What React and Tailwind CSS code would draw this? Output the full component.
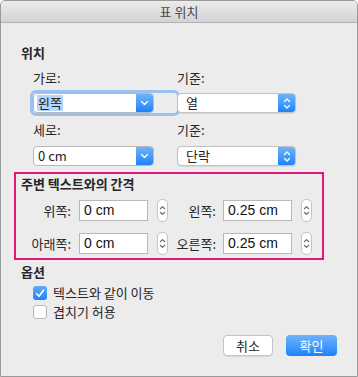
import React from "react";

const font = { fontFamily: '"Noto Sans CJK KR", "Liberation Sans", sans-serif' };
const numFont = { fontFamily: '"Liberation Sans", "Noto Sans CJK KR", sans-serif' };

function ChevronDown() {
  return (
    <svg width="9" height="6" viewBox="0 0 9 6" fill="none">
      <path d="M1.5 1.5 L4.5 4.5 L7.5 1.5" stroke="white" strokeWidth="1.4" strokeLinecap="round" strokeLinejoin="round" />
    </svg>
  );
}

function UpDown({ color = "white", w = 8, h = 13 }) {
  return (
    <svg width={w} height={h} viewBox="0 0 8 13" fill="none">
      <path d="M1.5 4.5 L4 2 L6.5 4.5" stroke={color} strokeWidth="1.3" strokeLinecap="round" strokeLinejoin="round" />
      <path d="M1.5 8.5 L4 11 L6.5 8.5" stroke={color} strokeWidth="1.3" strokeLinecap="round" strokeLinejoin="round" />
    </svg>
  );
}

// combo box with blue chevron button
function Combo({ value, focused, selected }) {
  const box = (
    <div className="flex h-[20px] w-[121px] items-stretch rounded-[4px] border border-[#b9b9b9] bg-white">
      <div className="flex flex-1 items-center pl-[3px] text-[13px] text-[#222]" style={numFont}>
        <span className={selected ? "bg-[#b3d7ff] px-[1px] leading-[16px]" : "px-[1px]"} style={font}>{value}</span>
      </div>
      <div className="flex w-[17px] items-center justify-center rounded-r-[3px] bg-gradient-to-b from-[#6cb3fa] to-[#1a82fb]">
        <ChevronDown />
      </div>
    </div>
  );
  if (!focused) return box;
  return <div className="-m-[3px] rounded-[6px] border-[3px] border-[#9bc1ef]">{box}</div>;
}

function Popup({ value }) {
  return (
    <div className="flex h-[20px] w-[119px] items-stretch rounded-[4px] border border-[#c2c2c2] bg-white shadow-[0_1px_1px_rgba(0,0,0,0.08)]">
      <div className="flex flex-1 items-center pl-[8px] text-[13px] text-[#222]" style={font}>{value}</div>
      <div className="flex w-[17px] items-center justify-center rounded-r-[3px] bg-gradient-to-b from-[#6cb3fa] to-[#1a82fb]">
        <UpDown />
      </div>
    </div>
  );
}

function Field({ value }) {
  return (
    <div className="flex h-[21px] w-[69px] items-center border border-[#b8b8b8] bg-white pl-[4px] text-[14px] text-[#111]" style={numFont}>
      {value}
    </div>
  );
}

function Stepper() {
  return (
    <div className="flex h-[23px] w-[11px] items-center justify-center rounded-[5px] border border-[#c4c4c4] bg-white">
      <UpDown color="#6b6b6b" w={7} h={15} />
    </div>
  );
}

function Label({ children, w }) {
  return (
    <div className={`${w} text-right text-[13px] text-[#262626]`} style={font}>{children}</div>
  );
}

export default function App() {
  return (
    <div className="flex h-[377px] w-[358px] flex-col overflow-hidden rounded-t-[5px] border border-[#9a9a9a] bg-[#ececec] text-[#262626]" style={font}>
      <div className="flex h-[22px] shrink-0 items-center justify-center border-b border-[#b3b3b3] bg-gradient-to-b from-[#ececec] to-[#d4d2d4] text-[13px] text-[#4a4a4a]">
        표 위치
      </div>

      <div className="flex flex-col pl-[20px]">
        <div className="mt-[22px] h-[16px] text-[13px] font-bold leading-[16px]">위치</div>

        <div className="ml-[12px] mt-[9px] flex">
          <div className="flex w-[144px] flex-col">
            <div className="h-[16px] text-[13px] leading-[16px]">가로:</div>
            <div className="mt-[7px]"><Combo value="왼쪽" focused selected /></div>
            <div className="mt-[9px] h-[16px] text-[13px] leading-[16px]">세로:</div>
            <div className="mt-[8px]"><Combo value="0 cm" /></div>
          </div>
          <div className="flex flex-col">
            <div className="h-[16px] text-[13px] leading-[16px]">기준:</div>
            <div className="mt-[7px]"><Popup value="열" /></div>
            <div className="mt-[9px] h-[16px] text-[13px] leading-[16px]">기준:</div>
            <div className="mt-[8px]"><Popup value="단락" /></div>
          </div>
        </div>

        <div className="-ml-[7px] mt-[6px] flex h-[88px] w-[310px] flex-col border-2 border-[#e0177f] pl-[5px] pt-[2px]">
          <div className="h-[16px] text-[13px] font-bold leading-[16px]">주변 텍스트와의 간격</div>
          <div className="mt-[7px] flex items-center">
            <Label w="w-[50px]">위쪽:</Label>
            <div className="ml-[8px]"><Field value="0 cm" /></div>
            <div className="ml-[9px]"><Stepper /></div>
            <Label w="w-[48px]">왼쪽:</Label>
            <div className="ml-[7px]"><Field value="0.25 cm" /></div>
            <div className="ml-[9px]"><Stepper /></div>
          </div>
          <div className="mt-[10px] flex items-center">
            <Label w="w-[50px]">아래쪽:</Label>
            <div className="ml-[8px]"><Field value="0 cm" /></div>
            <div className="ml-[9px]"><Stepper /></div>
            <Label w="w-[48px]">오른쪽:</Label>
            <div className="ml-[7px]"><Field value="0.25 cm" /></div>
            <div className="ml-[9px]"><Stepper /></div>
          </div>
        </div>

        <div className="mt-[4px] h-[16px] text-[13px] font-bold leading-[16px]">옵션</div>
        <div className="ml-[12px] mt-[5px] flex h-[16px] items-center gap-[6px]">
          <div className="flex h-[14px] w-[14px] items-center justify-center rounded-[3px] bg-gradient-to-b from-[#5fabfa] to-[#1b83fb]">
            <svg width="10" height="9" viewBox="0 0 10 9" fill="none">
              <path d="M1.5 4.8 L4 7.3 L8.5 1.2" stroke="white" strokeWidth="1.6" strokeLinecap="round" strokeLinejoin="round" />
            </svg>
          </div>
          <span className="text-[13px] leading-[16px]">텍스트와 같이 이동</span>
        </div>
        <div className="ml-[12px] mt-[3px] flex h-[16px] items-center gap-[6px]">
          <div className="h-[14px] w-[14px] rounded-[3px] border border-[#b5b5b5] bg-white" />
          <span className="text-[13px] leading-[16px]">겹치기 허용</span>
        </div>

        <div className="mt-[15px] flex pl-[202px]">
          <div className="flex h-[21px] w-[50px] items-center justify-center rounded-[4px] border border-[#c4c4c4] bg-white text-[13px] shadow-[0_1px_1px_rgba(0,0,0,0.08)]">
            취소
          </div>
          <div className="ml-[13px] flex h-[21px] w-[51px] items-center justify-center rounded-[4px] bg-gradient-to-b from-[#6cb3fa] to-[#1a82fb] text-[13px] text-white">
            확인
          </div>
        </div>
      </div>
    </div>
  );
}
